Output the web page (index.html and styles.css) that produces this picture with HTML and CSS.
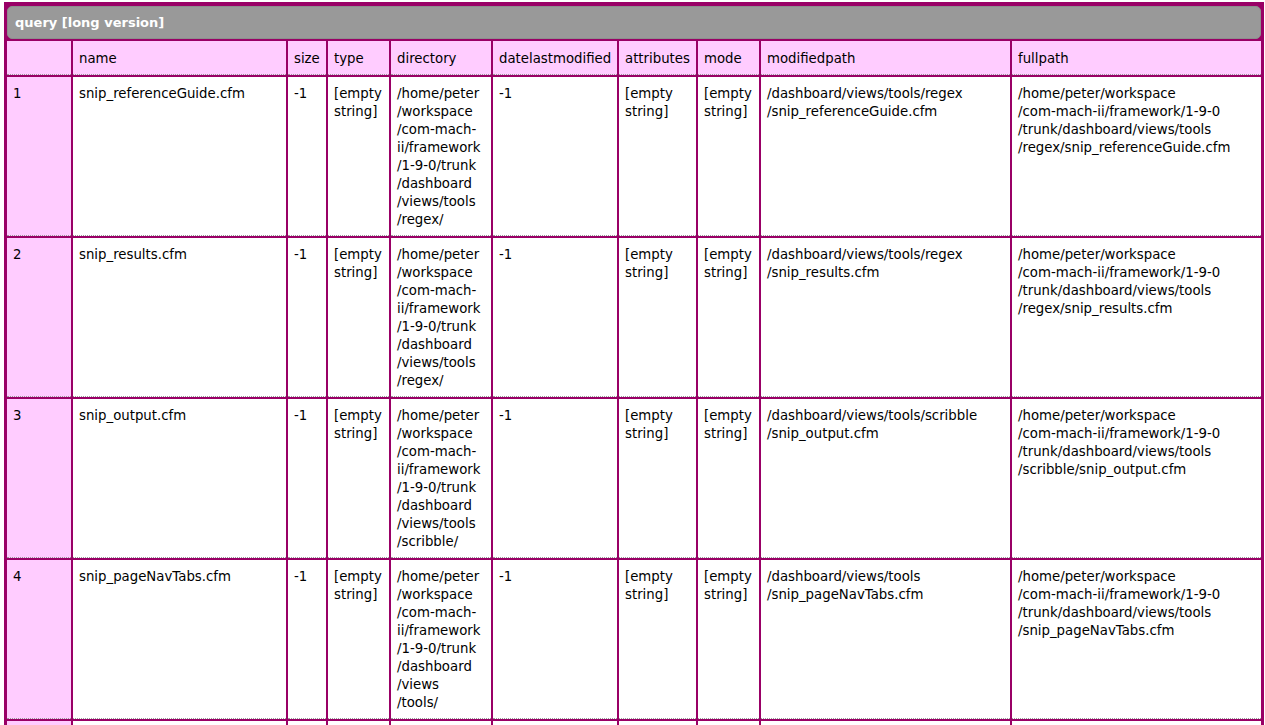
FILE: index.html
```html
<!DOCTYPE html>
<html>
<head>
<meta charset="utf-8">
<title>query dump</title>
<link rel="stylesheet" href="styles.css">
</head>
<body>
<table class="dump">
  <tr>
    <td class="title" colspan="10">query [long version]</td>
  </tr>
  <tr class="head">
    <th class="c-row"></th>
    <th class="c-name">name</th>
    <th class="c-size">size</th>
    <th class="c-type">type</th>
    <th class="c-dir">directory</th>
    <th class="c-date">datelastmodified</th>
    <th class="c-attr">attributes</th>
    <th class="c-mode">mode</th>
    <th class="c-mod">modifiedpath</th>
    <th class="c-full">fullpath</th>
  </tr>
  <tr>
    <td class="rownum">1</td>
    <td>snip_referenceGuide.cfm</td>
    <td>-1</td>
    <td>[empty string]</td>
    <td>/home/peter<br>/workspace<br>/com-mach-<br>ii/framework<br>/1-9-0/trunk<br>/dashboard<br>/views/tools<br>/regex/</td>
    <td>-1</td>
    <td>[empty string]</td>
    <td>[empty string]</td>
    <td>/dashboard/views/tools/regex<br>/snip_referenceGuide.cfm</td>
    <td>/home/peter/workspace<br>/com-mach-ii/framework/1-9-0<br>/trunk/dashboard/views/tools<br>/regex/snip_referenceGuide.cfm</td>
  </tr>
  <tr>
    <td class="rownum">2</td>
    <td>snip_results.cfm</td>
    <td>-1</td>
    <td>[empty string]</td>
    <td>/home/peter<br>/workspace<br>/com-mach-<br>ii/framework<br>/1-9-0/trunk<br>/dashboard<br>/views/tools<br>/regex/</td>
    <td>-1</td>
    <td>[empty string]</td>
    <td>[empty string]</td>
    <td>/dashboard/views/tools/regex<br>/snip_results.cfm</td>
    <td>/home/peter/workspace<br>/com-mach-ii/framework/1-9-0<br>/trunk/dashboard/views/tools<br>/regex/snip_results.cfm</td>
  </tr>
  <tr>
    <td class="rownum">3</td>
    <td>snip_output.cfm</td>
    <td>-1</td>
    <td>[empty string]</td>
    <td>/home/peter<br>/workspace<br>/com-mach-<br>ii/framework<br>/1-9-0/trunk<br>/dashboard<br>/views/tools<br>/scribble/</td>
    <td>-1</td>
    <td>[empty string]</td>
    <td>[empty string]</td>
    <td>/dashboard/views/tools/scribble<br>/snip_output.cfm</td>
    <td>/home/peter/workspace<br>/com-mach-ii/framework/1-9-0<br>/trunk/dashboard/views/tools<br>/scribble/snip_output.cfm</td>
  </tr>
  <tr>
    <td class="rownum">4</td>
    <td>snip_pageNavTabs.cfm</td>
    <td>-1</td>
    <td>[empty string]</td>
    <td>/home/peter<br>/workspace<br>/com-mach-<br>ii/framework<br>/1-9-0/trunk<br>/dashboard<br>/views<br>/tools/</td>
    <td>-1</td>
    <td>[empty string]</td>
    <td>[empty string]</td>
    <td>/dashboard/views/tools<br>/snip_pageNavTabs.cfm</td>
    <td>/home/peter/workspace<br>/com-mach-ii/framework/1-9-0<br>/trunk/dashboard/views/tools<br>/snip_pageNavTabs.cfm</td>
  </tr>
  <tr>
    <td class="rownum">5</td>
    <td>snip_pageHeader.cfm</td>
    <td>-1</td>
    <td>[empty string]</td>
    <td>/home/peter<br>/workspace<br>/com-mach-<br>ii/framework<br>/1-9-0/trunk<br>/dashboard<br>/views<br>/tools/</td>
    <td>-1</td>
    <td>[empty string]</td>
    <td>[empty string]</td>
    <td>/dashboard/views/tools<br>/snip_pageHeader.cfm</td>
    <td>/home/peter/workspace<br>/com-mach-ii/framework/1-9-0<br>/trunk/dashboard/views/tools<br>/snip_pageHeader.cfm</td>
  </tr>
</table>
</body>
</html>
```
FILE: styles.css
```css
html, body {
  margin: 0;
  padding: 0;
  background: #ffffff;
}

body {
  padding: 4px 0 0 4px;
  font-family: "DejaVu Sans", Verdana, sans-serif;
  font-size: 13.3px;
  line-height: 18px;
  color: #000000;
}

.dump {
  border-collapse: separate;
  border-spacing: 2px;
  border-left: 1px solid #990066;
  border-right: 1px solid #990066;
  background: #990066;
  margin-top: -2px;
  padding-top: 2px;
}

.dump td,
.dump th {
  box-sizing: border-box;
  padding: 8px 3px 6px 6px;
  vertical-align: top;
  text-align: left;
  font-weight: normal;
  background: #ffffff;
  border-bottom: 1px dotted #9a9a9a;
}

.dump .title {
  background: #999999;
  color: #ffffff;
  font-weight: bold;
  font-size: 13px;
  border-radius: 5px;
  border: 1px solid #8d8d8d;
  padding: 6px 6px 6px 7px;
  line-height: 19px;
}

.dump .head th {
  background: #ffccff;
  padding-top: 9px;
  padding-bottom: 6px;
}

.dump .rownum {
  background: #ffccff;
}

.c-row { width: 64px; }
.c-name { width: 213px; }
.c-size { width: 38px; }
.c-type { width: 61px; }
.c-dir { width: 100px; }
.c-date { width: 124px; }
.c-attr { width: 77px; }
.c-mode { width: 61px; }
.c-mod { width: 249px; }
.c-full { width: 249px; }
```
